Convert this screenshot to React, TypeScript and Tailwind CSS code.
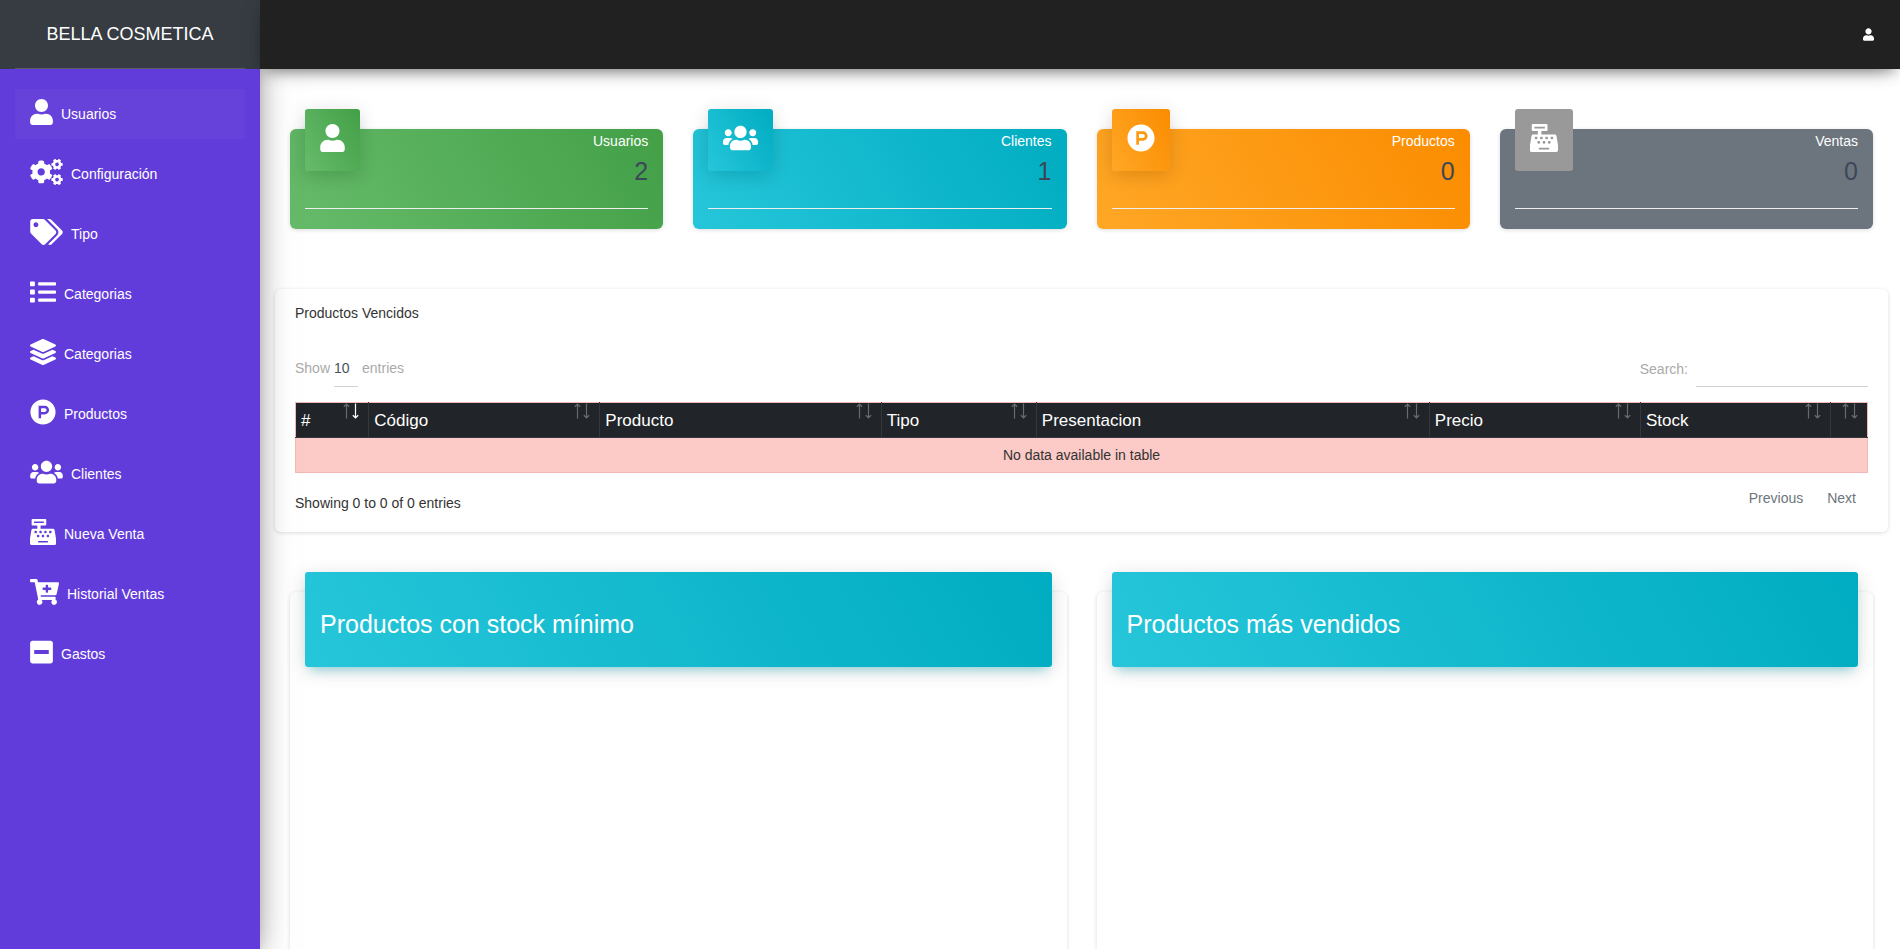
import type { ReactNode } from "react";
import type { IconType } from "react-icons";
import {
  FaCartPlus,
  FaCashRegister,
  FaCogs,
  FaLayerGroup,
  FaList,
  FaMinusSquare,
  FaProductHunt,
  FaTags,
  FaUser,
  FaUsers,
} from "react-icons/fa";

const menu: { label: string; icon: IconType; width: string; active?: boolean }[] = [
  { label: "Usuarios", icon: FaUser, width: "w-[23px]", active: true },
  { label: "Configuración", icon: FaCogs, width: "w-[33px]" },
  { label: "Tipo", icon: FaTags, width: "w-[33px]" },
  { label: "Categorias", icon: FaList, width: "w-[26px]" },
  { label: "Categorias", icon: FaLayerGroup, width: "w-[26px]" },
  { label: "Productos", icon: FaProductHunt, width: "w-[26px]" },
  { label: "Clientes", icon: FaUsers, width: "w-[33px]" },
  { label: "Nueva Venta", icon: FaCashRegister, width: "w-[26px]" },
  { label: "Historial Ventas", icon: FaCartPlus, width: "w-[29px]" },
  { label: "Gastos", icon: FaMinusSquare, width: "w-[23px]" },
];

const stats: { label: string; value: number; icon: IconType; width: string; card: string; badge: string }[] = [
  {
    label: "Usuarios",
    value: 2,
    icon: FaUser,
    width: "w-[25px]",
    card: "bg-[linear-gradient(60deg,#66bb6a,#43a047)]",
    badge:
      "bg-[linear-gradient(60deg,#66bb6a,#43a047)] shadow-[0_4px_20px_0_rgba(0,0,0,0.14),0_7px_10px_-5px_rgba(76,175,80,0.4)]",
  },
  {
    label: "Clientes",
    value: 1,
    icon: FaUsers,
    width: "w-[35px]",
    card: "bg-[linear-gradient(60deg,#26c6da,#00acc1)]",
    badge:
      "bg-[linear-gradient(60deg,#26c6da,#00acc1)] shadow-[0_4px_20px_0_rgba(0,0,0,0.14),0_7px_10px_-5px_rgba(0,188,212,0.4)]",
  },
  {
    label: "Productos",
    value: 0,
    icon: FaProductHunt,
    width: "w-[28px]",
    card: "bg-[linear-gradient(60deg,#ffa726,#fb8c00)]",
    badge:
      "bg-[linear-gradient(60deg,#ffa726,#fb8c00)] shadow-[0_4px_20px_0_rgba(0,0,0,0.14),0_7px_10px_-5px_rgba(255,152,0,0.4)]",
  },
  {
    label: "Ventas",
    value: 0,
    icon: FaCashRegister,
    width: "w-[28px]",
    card: "bg-[#6c757d]",
    badge: "bg-[#999999]",
  },
];

const columns = [
  { label: "#", width: "w-[4.66%]", sorted: true },
  { label: "Código", width: "w-[14.7%]" },
  { label: "Producto", width: "w-[17.9%]" },
  { label: "Tipo", width: "w-[9.87%]" },
  { label: "Presentacion", width: "w-[25%]" },
  { label: "Precio", width: "w-[13.43%]" },
  { label: "Stock", width: "w-[12.08%]" },
  { label: "", width: "w-[2.36%]" },
];

function SortArrows({ sorted }: { sorted?: boolean }) {
  return (
    <svg
      width="16"
      height="16"
      viewBox="0 0 16 16"
      fill="none"
      stroke="#ffffff"
      strokeWidth="1.2"
      aria-hidden="true"
      className="absolute top-0 right-[9px]"
    >
      <path d="M3.5 15.5V1M0.8 3.8L3.5 1.2L6.2 3.8" strokeOpacity="0.32" />
      <path d="M12.5 0.5V15M9.8 12.2L12.5 14.8L15.2 12.2" strokeOpacity={sorted ? 1 : 0.32} />
    </svg>
  );
}

function Sidebar() {
  return (
    <aside className="relative flex w-[260px] shrink-0 flex-col shadow-[0_16px_38px_-12px_rgba(0,0,0,0.56),0_4px_25px_0_rgba(0,0,0,0.12),0_8px_10px_-5px_rgba(0,0,0,0.2)]">
      <div className="flex h-[69px] shrink-0 flex-col bg-[#363c42] px-[15px]">
        <a
          href="#inicio"
          className="flex grow items-center justify-center border-b border-[#5a5e62] text-lg leading-[30px] text-white"
        >
          BELLA COSMETICA
        </a>
      </div>
      <nav className="relative z-20 flex grow flex-col gap-[10px] bg-[#623cda] px-[15px] pt-5">
        {menu.map(({ label, icon: Icon, width, active }, i) => (
          <a
            key={i}
            href="#menu"
            className={`flex h-[50px] items-center gap-2 rounded-[3px] px-[15px] text-sm text-white ${
              active ? "bg-[#6642da]" : ""
            }`}
          >
            <Icon className={`mb-1 h-[26px] ${width}`} />
            <span>{label}</span>
          </a>
        ))}
      </nav>
    </aside>
  );
}

function StatCard({ label, value, icon: Icon, width, card, badge }: (typeof stats)[number]) {
  return (
    <section className={`flex h-[100px] flex-col rounded-md px-[15px] shadow-[0_1px_4px_0_rgba(0,0,0,0.14)] ${card}`}>
      <div className="flex grow items-start justify-between">
        <div className={`-mt-5 h-[62px] rounded-[3px] p-[15px] ${badge}`}>
          <Icon className={`h-7 text-white ${width}`} />
        </div>
        <div className="pt-[2px] text-right">
          <a href="#detalle" className="block text-sm leading-[21px] text-white">
            {label}
          </a>
          <h3 className="mt-[2px] text-[25px] leading-[35px] text-[#3c4858]">{value}</h3>
        </div>
      </div>
      <div className="h-[21px] border-t border-[#eeeeee]" />
    </section>
  );
}

function ExpiredProducts() {
  return (
    <section className="mt-[60px] mr-3 ml-[15px] rounded-md bg-white px-5 pt-[14px] pb-[18px] text-sm text-[#333333] shadow-[0_1px_4px_0_rgba(0,0,0,0.14)]">
      <h2 className="leading-[21px]">Productos Vencidos</h2>
      <div className="mt-7 flex h-[35px] items-stretch justify-between text-[#aaaaaa]">
        <div className="flex items-center gap-1">
          <label htmlFor="page-size" className="pb-1">
            Show
          </label>
          <select
            id="page-size"
            defaultValue="10"
            className="h-[35px] w-6 appearance-none border-b border-[#d2d2d2] bg-transparent pb-[2px] text-[#495057] outline-none"
          >
            <option>10</option>
            <option>25</option>
            <option>50</option>
            <option>100</option>
          </select>
          <label htmlFor="page-size" className="pb-1">
            entries
          </label>
        </div>
        <div className="flex items-center gap-2">
          <label htmlFor="search" className="pb-[2px]">
            Search:
          </label>
          <input
            id="search"
            type="search"
            className="h-[35px] w-[172px] border-b border-[#d2d2d2] bg-transparent text-[#495057] outline-none"
          />
        </div>
      </div>
      <table className="mt-[15px] w-full table-fixed border-collapse border border-[#f2b8b5]">
        <thead>
          <tr className="h-[35px] bg-[#212529] text-left text-[17px] text-white">
            {columns.map((c) => (
              <th
                key={c.label}
                className={`relative border-r border-b border-[#32383e] px-[5px] pt-[2px] font-normal last:border-r-[#f2b8b5] ${c.width}`}
              >
                {c.label}
                <SortArrows sorted={c.sorted} />
              </th>
            ))}
          </tr>
        </thead>
        <tbody>
          <tr className="h-[35px] bg-[#fccac7]">
            <td colSpan={columns.length} className="text-center">
              No data available in table
            </td>
          </tr>
        </tbody>
      </table>
      <div className="mt-[15px] flex items-start justify-between">
        <p className="pt-[5px] leading-[21px]">Showing 0 to 0 of 0 entries</p>
        <div className="flex text-[#6c757d]">
          <button type="button" className="px-3 leading-[21px]">
            Previous
          </button>
          <button type="button" className="px-3 leading-[21px]">
            Next
          </button>
        </div>
      </div>
    </section>
  );
}

function ChartCard({ children }: { children: ReactNode }) {
  return (
    <section className="min-h-[440px] rounded-md bg-white px-[15px] shadow-[0_1px_4px_0_rgba(0,0,0,0.14)]">
      <header className="-mt-5 rounded-[3px] bg-[linear-gradient(60deg,#26c6da,#00acc1)] px-[15px] pt-[35px] pb-[25px] shadow-[0_4px_20px_0_rgba(0,0,0,0.14),0_7px_10px_-5px_rgba(0,188,212,0.4)]">
        <h2 className="text-[25px] leading-[35px] text-white">{children}</h2>
      </header>
    </section>
  );
}

export default function App() {
  return (
    <div className="flex h-screen overflow-hidden bg-white font-['Liberation_Sans',Arial,sans-serif]">
      <Sidebar />
      <div className="flex min-w-0 grow flex-col">
        <header className="relative z-10 flex h-[69px] shrink-0 items-center justify-end bg-[#212121] px-[26px] shadow-[0_10px_20px_-12px_rgba(0,0,0,0.42),0_3px_20px_0_rgba(0,0,0,0.12),0_8px_10px_-5px_rgba(0,0,0,0.2)]">
          <button type="button" aria-label="Cuenta" className="text-white">
            <FaUser className="h-[13px] w-[11px]" />
          </button>
        </header>
        <main className="grow overflow-y-auto pt-[60px] [scrollbar-width:none]">
          <div className="grid grid-cols-4 gap-[30px] pr-[27px] pl-[30px]">
            {stats.map((s) => (
              <StatCard key={s.label} {...s} />
            ))}
          </div>
          <ExpiredProducts />
          <div className="mt-[60px] grid grid-cols-2 gap-[30px] pr-[27px] pb-[30px] pl-[30px]">
            <ChartCard>Productos con stock mínimo</ChartCard>
            <ChartCard>Productos más vendidos</ChartCard>
          </div>
        </main>
      </div>
    </div>
  );
}
